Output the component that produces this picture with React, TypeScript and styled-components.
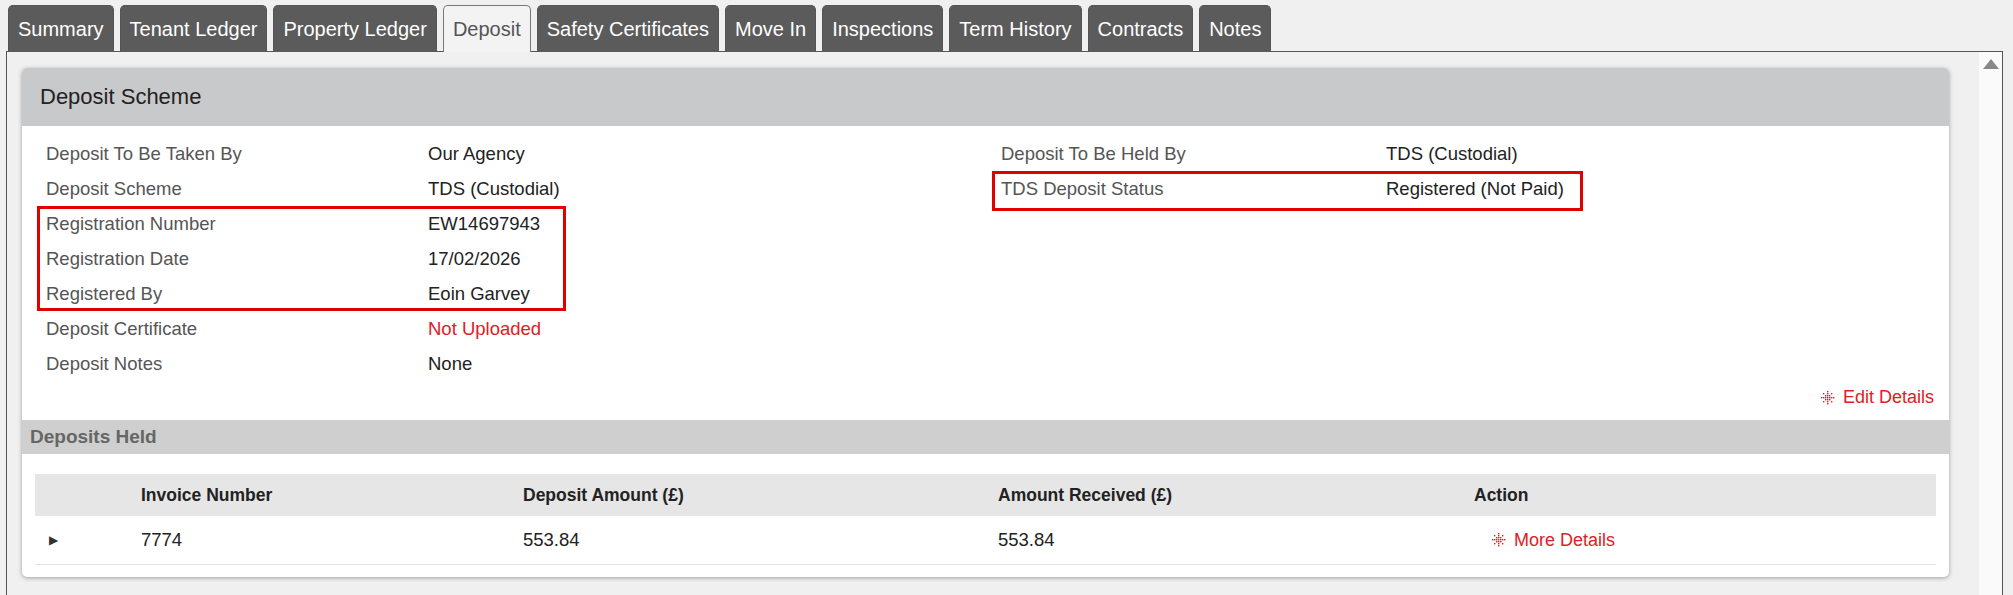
import React, { ReactElement } from 'react'
import styled, { createGlobalStyle } from 'styled-components'

const Global = createGlobalStyle`
  html, body { margin: 0; padding: 0; background: #f0f0f0; }
  body { font-family: "Liberation Sans", Arial, sans-serif; }
`

const Styled = {
  Page: styled.div`
    width: 2013px;
    height: 595px;
    overflow: hidden;
    padding: 5px 10px 0 6px;
    box-sizing: border-box;
  `,
  Tabs: styled.div`
    display: flex;
    gap: 6px;
    padding-left: 2px;
    height: 46px;
  `,
  Tab: styled.div<{ $active?: boolean }>`
    display: flex;
    align-items: center;
    padding: 0 9px;
    font-size: 20px;
    border: 1px solid ${(p) => (p.$active ? '#777' : '#555')};
    border-bottom: none;
    border-radius: 5px 5px 0 0;
    background: ${(p) => (p.$active ? '#f3f3f3' : '#5b5b5b')};
    color: ${(p) => (p.$active ? '#555' : '#fff')};
    position: relative;
    z-index: 1;
    margin-bottom: -1px;
  `,
  Frame: styled.div`
    display: flex;
    border: 1px solid #555;
    height: 560px;
    box-sizing: border-box;
  `,
  Content: styled.div`
    flex: 1;
    padding: 16px 30px 0 15px;
  `,
  Scroll: styled.div`
    width: 23px;
    background: #fafafa;
    display: flex;
    justify-content: center;
    padding-top: 7px;
  `,
  Card: styled.div`
    background: #fff;
    border-radius: 5px;
    box-shadow: 0 1px 4px rgba(0, 0, 0, 0.35);
    overflow: hidden;
    padding-bottom: 12px;
  `,
  CardHead: styled.div`
    background: #c8c9cb;
    height: 58px;
    display: flex;
    align-items: center;
    padding-left: 18px;
    font-size: 22px;
    color: #222;
  `,
  Details: styled.div`
    position: relative;
    display: grid;
    grid-template-columns: 382px 573px 385px 1fr;
    grid-auto-rows: 35px;
    padding: 10px 0 0 24px;
  `,
  Label: styled.div`
    font-size: 18.5px;
    color: #555;
    display: flex;
    align-items: center;
  `,
  Value: styled.div<{ $red?: boolean }>`
    font-size: 18.5px;
    color: ${(p) => (p.$red ? '#e0201f' : '#222')};
    display: flex;
    align-items: center;
  `,
  Highlight: styled.div`
    position: absolute;
    border: 3px solid #e00000;
    box-sizing: border-box;
    pointer-events: none;
  `,
  Link: styled.div<{ $indent?: number }>`
    display: flex;
    align-items: center;
    gap: 8px;
    color: #e0201f;
    font-size: 18px;
    padding-left: ${(p) => p.$indent ?? 0}px;
  `,
  EditRow: styled.div`
    display: flex;
    justify-content: flex-end;
    padding: 6px 15px 12px 0;
  `,
  Section: styled.div`
    background: #cfcfcf;
    height: 34px;
    display: flex;
    align-items: center;
    padding-left: 8px;
    font-size: 19px;
    font-weight: bold;
    color: #666;
  `,
  Table: styled.div`
    margin: 20px 13px 0 13px;
  `,
  Row: styled.div<{ $head?: boolean }>`
    display: grid;
    grid-template-columns: 106px 382px 475px 476px 1fr;
    height: ${(p) => (p.$head ? '42px' : '48px')};
    align-items: center;
    background: ${(p) => (p.$head ? '#e6e6e6' : '#fff')};
    border-bottom: ${(p) => (p.$head ? 'none' : '1px solid #e4e4e4')};
    font-size: ${(p) => (p.$head ? '17.5px' : '18.5px')};
    font-weight: ${(p) => (p.$head ? 'bold' : 'normal')};
    color: #222;
  `,
  Caret: styled.div`
    padding-left: 14px;
    font-size: 12px;
    color: #333;
  `,
}

function PlusIcon(): ReactElement {
  const cells: [number, number][] = []
  for (let y = 0; y < 7; y++)
    for (let x = 0; x < 7; x++) {
      const inPlus = x === 3 || y === 3 || (x >= 1 && x <= 5 && y >= 1 && y <= 5 && (x + y) % 2 === 0)
      if (inPlus) cells.push([x, y])
    }
  return (
    <svg width='14' height='14' viewBox='0 0 14 14'>
      {cells.map(([x, y]) => (
        <rect key={`${x}-${y}`} x={x * 2} y={y * 2} width='1.4' height='1.4' fill='#e0201f' />
      ))}
    </svg>
  )
}

const tabs = ['Summary', 'Tenant Ledger', 'Property Ledger', 'Deposit', 'Safety Certificates', 'Move In', 'Inspections', 'Term History', 'Contracts', 'Notes']

const details: [string, string, string?, string?][] = [
  ['Deposit To Be Taken By', 'Our Agency', 'Deposit To Be Held By', 'TDS (Custodial)'],
  ['Deposit Scheme', 'TDS (Custodial)', 'TDS Deposit Status', 'Registered (Not Paid)'],
  ['Registration Number', 'EW14697943'],
  ['Registration Date', '17/02/2026'],
  ['Registered By', 'Eoin Garvey'],
  ['Deposit Certificate', 'Not Uploaded'],
  ['Deposit Notes', 'None'],
]

export default function App(): ReactElement {
  return (
    <Styled.Page>
      <Global />
      <Styled.Tabs>
        {tabs.map((t) => (
          <Styled.Tab key={t} $active={t === 'Deposit'}>{t}</Styled.Tab>
        ))}
      </Styled.Tabs>
      <Styled.Frame>
        <Styled.Content>
          <Styled.Card>
            <Styled.CardHead>Deposit Scheme</Styled.CardHead>
            <Styled.Details>
              {details.map(([l, v, l2, v2]) => (
                <React.Fragment key={l}>
                  <Styled.Label>{l}</Styled.Label>
                  <Styled.Value $red={v === 'Not Uploaded'}>{v}</Styled.Value>
                  <Styled.Label>{l2 ?? ''}</Styled.Label>
                  <Styled.Value>{v2 ?? ''}</Styled.Value>
                </React.Fragment>
              ))}
              <Styled.Highlight style={{ left: 15, top: 80, width: 529, height: 105 }} />
              <Styled.Highlight style={{ left: 970, top: 45, width: 591, height: 40 }} />
            </Styled.Details>
            <Styled.EditRow>
              <Styled.Link><PlusIcon />Edit Details</Styled.Link>
            </Styled.EditRow>
            <Styled.Section>Deposits Held</Styled.Section>
            <Styled.Table>
              <Styled.Row $head>
                <div />
                <div>Invoice Number</div>
                <div>Deposit Amount (£)</div>
                <div>Amount Received (£)</div>
                <div>Action</div>
              </Styled.Row>
              <Styled.Row>
                <Styled.Caret>▶</Styled.Caret>
                <div>7774</div>
                <div>553.84</div>
                <div>553.84</div>
                <Styled.Link $indent={18}><PlusIcon />More Details</Styled.Link>
              </Styled.Row>
            </Styled.Table>
          </Styled.Card>
        </Styled.Content>
        <Styled.Scroll>
          <svg width='16' height='10' viewBox='0 0 16 10'><path d='M8 0 L16 10 L0 10 Z' fill='#888' /></svg>
        </Styled.Scroll>
      </Styled.Frame>
    </Styled.Page>
  )
}
